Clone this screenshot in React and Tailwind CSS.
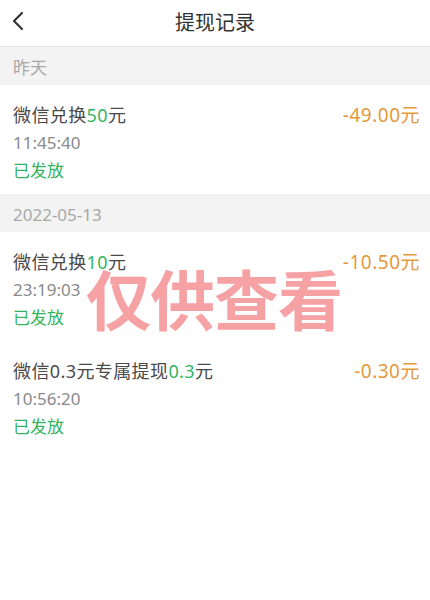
const records = [
  {
    date: '昨天',
    items: [{ prefix: '微信兑换', value: '50', suffix: '元', amount: '-49.00元', time: '11:45:40' }]
  },
  {
    date: '2022-05-13',
    items: [
      { prefix: '微信兑换', value: '10', suffix: '元', amount: '-10.50元', time: '23:19:03' },
      { prefix: '微信0.3元专属提现', value: '0.3', suffix: '元', amount: '-0.30元', time: '10:56:20' }
    ]
  }
];

function RecordItem({ item }) {
  return (
    <div className="flex h-[109px] justify-between pl-[13px] pr-[10px] pt-[18px]">
      <div>
        <p className="text-[18px] leading-[24px] tracking-[0.4px] text-[#4a4a4a]">
          {item.prefix}
          <span className="text-[#33b55f]">{item.value}</span>
          {item.suffix}
        </p>
        <p className="mt-[4px] text-[17px] leading-[24px] text-[#8a8a8a]">{item.time}</p>
        <p className="mt-[4px] text-[17px] leading-[24px] text-[#33b55f]">已发放</p>
      </div>
      <p className="text-[19px] leading-[24px] tracking-[0.5px] text-[#e39a3b]">{item.amount}</p>
    </div>
  );
}

export default function App() {
  return (
    <div className="relative h-[600px] w-[430px] overflow-hidden bg-white font-['Noto_Sans','Noto_Sans_CJK_SC',sans-serif]">
      <header className="relative flex h-[47px] items-center justify-center border-b border-[#e4e4e4]">
        <svg className="absolute left-[11px] top-[11px]" width="14" height="20" viewBox="0 0 14 20" fill="none">
          <path d="M11 2L3 10L11 18" stroke="#333" strokeWidth="2.2" strokeLinecap="round" strokeLinejoin="round" />
        </svg>
        <h1 className="text-[20px] text-[#333]">提现记录</h1>
      </header>
      {records.map((group) => (
        <section key={group.date}>
          <div className="flex h-[38px] items-center bg-[#f3f3f3] px-[13px] pt-[3px] text-[17px] text-[#a8a8a8]">{group.date}</div>
          {group.items.map((item) => (
            <RecordItem key={item.time} item={item} />
          ))}
        </section>
      ))}
      <div className="pointer-events-none absolute left-[86px] top-[266px] text-[65px] font-bold leading-[68px] tracking-[-1px] text-[#f6a2a4]">
        仅供查看
      </div>
    </div>
  );
}
